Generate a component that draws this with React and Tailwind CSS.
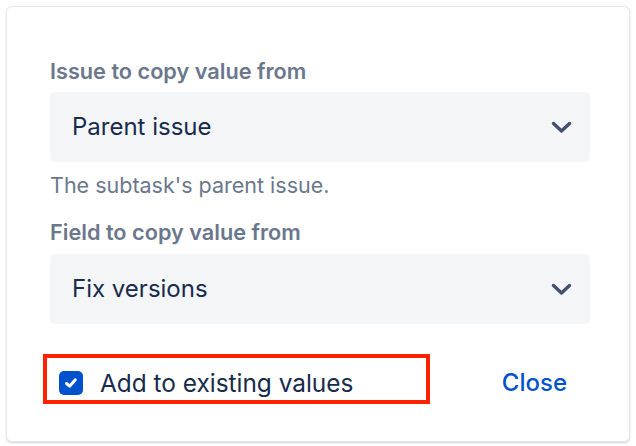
import { useState } from "react";

const Chevron = () => (
  <svg width="21" height="13" viewBox="0 0 21 13" fill="none">
    <path
      d="M2.5 2.5L10.5 10L18.5 2.5"
      stroke="#42526E"
      strokeWidth="3.4"
      strokeLinecap="round"
      strokeLinejoin="round"
    />
  </svg>
);

const SelectBox = ({ value }) => (
  <div className="flex h-[70px] items-center justify-between rounded-[5px] bg-[#F4F5F7] pl-[22px] pr-[18px]">
    <span className="text-[24px] leading-7 text-[#172B4D]">{value}</span>
    <Chevron />
  </div>
);

const App = () => {
  const [checked, setChecked] = useState(true);

  return (
    <div
      className="h-[446px] w-[636px] bg-white p-[6px]"
      style={{ fontFamily: "Inter, 'Liberation Sans', sans-serif" }}
    >
      <div className="h-[436px] rounded-md border border-[#E6E8EC] bg-white pl-[43px] pr-[39px] pt-[52px] shadow-[0_1px_2px_rgba(9,30,66,0.2)]">
        <div className="text-[21.7px] font-semibold leading-6 text-[#6B778C]">
          Issue to copy value from
        </div>
        <div className="mt-[9px]">
          <SelectBox value="Parent issue" />
        </div>
        <div className="mt-[11px] text-[21.5px] leading-6 text-[#6B778C]">
          The subtask's parent issue.
        </div>
        <div className="mt-[23px] text-[21.7px] font-semibold leading-6 text-[#6B778C]">
          Field to copy value from
        </div>
        <div className="mt-[10px]">
          <SelectBox value="Fix versions" />
        </div>

        <div className="mt-[30px] flex items-center justify-between">
          <label
            className="-ml-[7px] flex h-[50px] w-[387px] cursor-pointer items-center gap-[17px] border-4 border-[#FF2200] pl-[12px] pt-[8px]"
            onClick={() => setChecked(!checked)}
          >
            <span className="flex h-6 w-6 shrink-0 items-center justify-center rounded-[5px] bg-[#0052CC]">
              {checked && (
                <svg width="16" height="16" viewBox="0 0 16 16" fill="none">
                  <path
                    d="M3.5 8.5L6.6 11.2L12.3 4.8"
                    stroke="white"
                    strokeWidth="3"
                    strokeLinecap="round"
                    strokeLinejoin="round"
                  />
                </svg>
              )}
            </span>
            <span className="whitespace-nowrap text-[24.4px] leading-7 text-[#172B4D]">
              Add to existing values
            </span>
          </label>
          <button className="mr-[23px] pt-[8px] text-[24px] font-medium leading-7 text-[#0052CC]">
            Close
          </button>
        </div>
      </div>
    </div>
  );
};

export default App;
